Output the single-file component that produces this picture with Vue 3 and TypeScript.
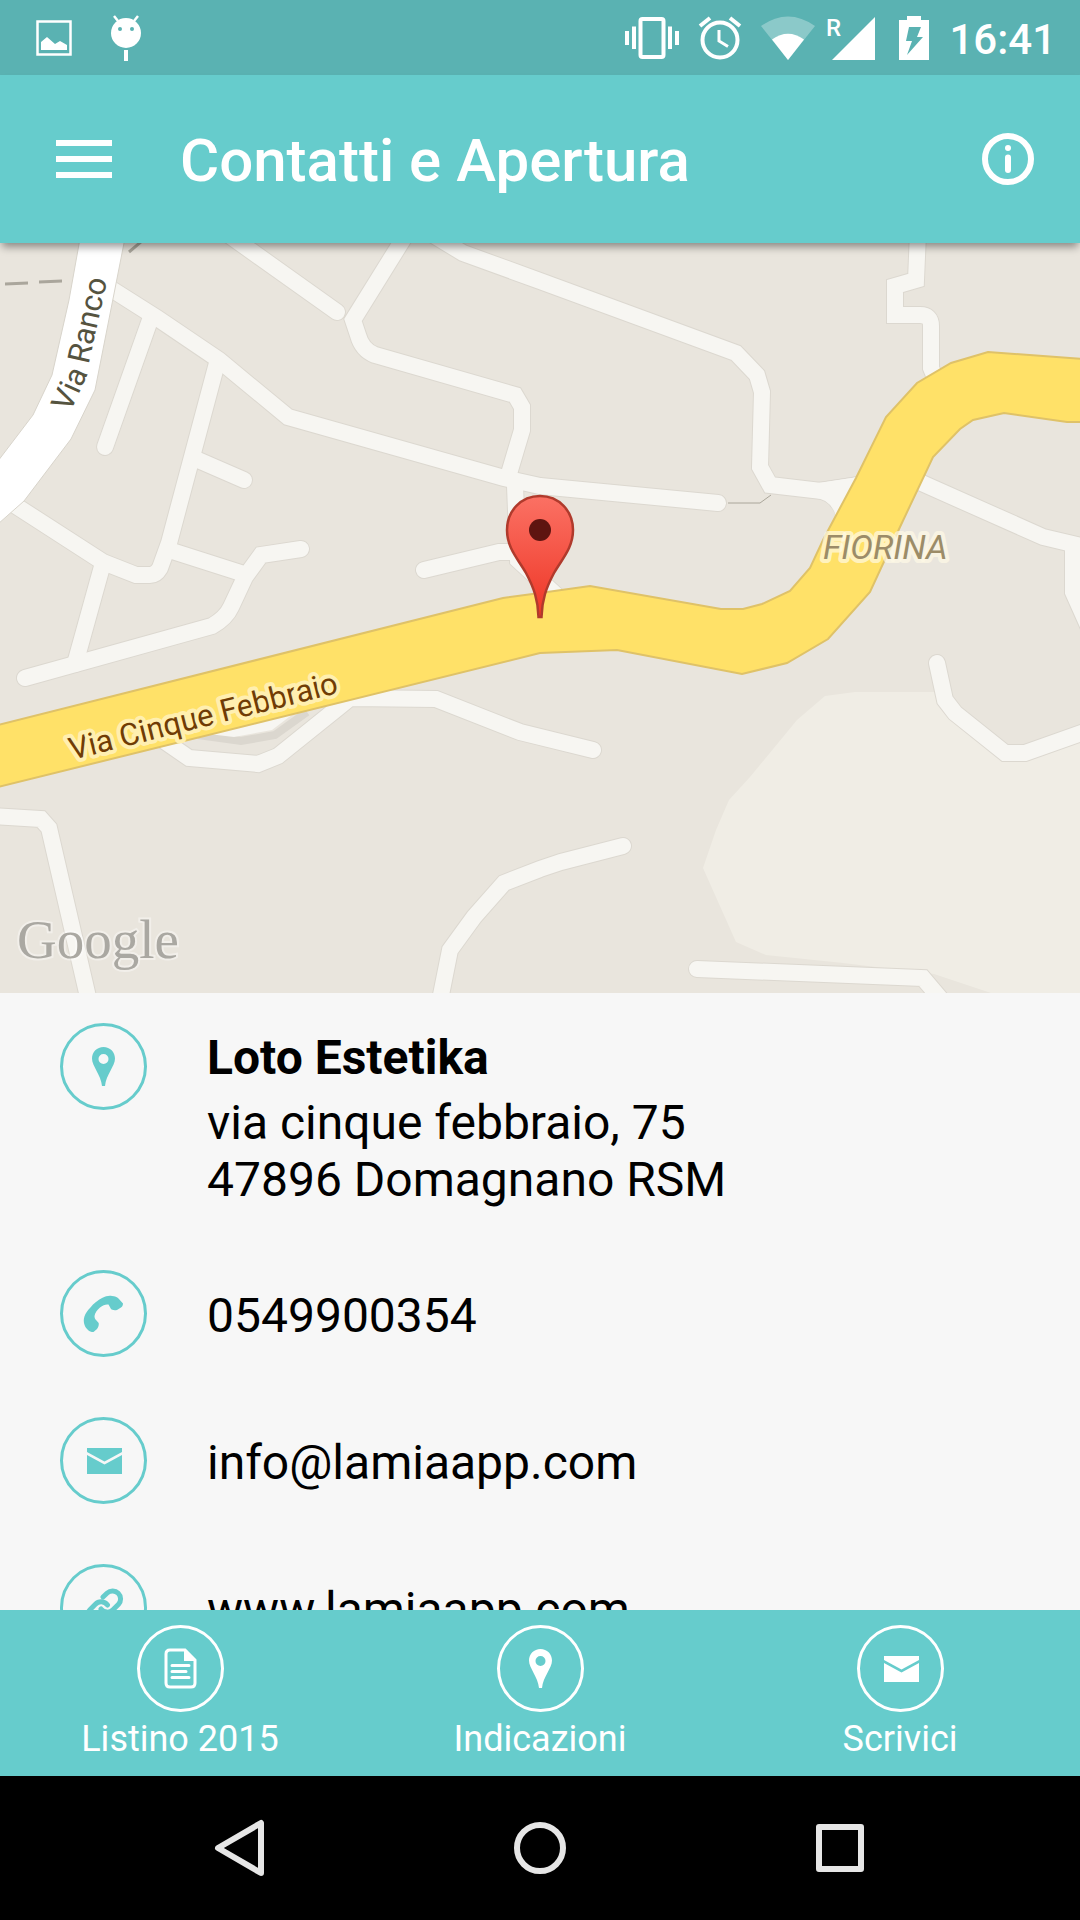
<script setup lang="ts">
type IconName = 'pin' | 'phone' | 'mail' | 'link' | 'doc'

interface Contact {
  icon: IconName
  text: string
  href: string
}

interface Action {
  icon: IconName
  label: string
}

interface IconShape {
  d: string
  stroke?: number
}

const icons: Record<IconName, IconShape[]> = {
  pin: [
    {
      d: 'M43.5 24C37 24 32 29 32 35.500C32 43 41 52 42 63H45C46 52 55 43 55 35.500C55 29 50 24 43.500 24ZM43.500 31A5 5 0 1 1 43.500 41A5 5 0 1 1 43.500 31Z',
    },
  ],
  phone: [
    {
      d: 'M24 53C23 47 26 42 30 38C34 33 38 30 42 28C46 26 49 25.500 52 26C55 26 57 27 58.500 28.500L63 33.500C63 35 62.500 36.500 61 37.500L57 40C54 40.500 52 40 51 39L48.500 34.500C46 34 43 35 40 37.500C37 40 35 43 34.500 46C34.500 48 35 49 36.500 50.500L38.700 53C39 55 38.500 57 37 59L33.500 62C31 62 29.500 61.500 28 60C26 58 24.500 56 24 53Z',
    },
  ],
  mail: [{ d: 'M27 31H62V35L44.500 44.500L27 35Z' }, { d: 'M27 38L44.500 47.500L62 38V57H27Z' }],
  link: [
    { d: 'M41 45A8 8 0 0 0 53 45.800L58.500 40.300A8 8 0 0 0 47.200 29L43 33', stroke: 5 },
    { d: 'M47.500 41A8 8 0 0 0 35.400 40.200L30 45.700A8 8 0 0 0 41.300 57L45 53', stroke: 5 },
  ],
  doc: [
    { d: 'M33 25H48L58 35V58Q58 62 54 62H33Q29 62 29 58V29Q29 25 33 25Z', stroke: 3 },
    { d: 'M47 24.500L58.500 36H47Z' },
    { d: 'M35 40.500H52M35 46.500H49M35 52.500H52', stroke: 3 },
  ],
}

const contacts: Contact[] = [
  { icon: 'phone', text: '0549900354', href: 'tel:0549900354' },
  { icon: 'mail', text: 'info@lamiaapp.com', href: 'mailto:info@lamiaapp.com' },
  { icon: 'link', text: 'www.lamiaapp.com', href: '#sito' },
]

const actions: Action[] = [
  { icon: 'doc', label: 'Listino 2015' },
  { icon: 'pin', label: 'Indicazioni' },
  { icon: 'mail', label: 'Scrivici' },
]

const minorRoads: string[] = [
  'M105 285L157 318L219 360L288 417L504 478L540 486L718 503',
  'M150 320L105 447',
  'M217 363L193 453L169 543L160 568Q156 575 150 575H136L103 562L10 502',
  'M198 460L244 480',
  'M169 550L241 573',
  'M301 549L261 555L245 577L231 607Q226 618 212 626L25 678',
  'M103 563L75 664',
  'M226 233L337 312',
  'M407 233L353 320L358 335Q362 350 375 355L515 395L522 407V430L508 477',
  'M425 230L463 253L540 281L736 353L757 375L762 392L760 467L770 485L821 491L860 485',
  'M515 486L518 560L556 595',
  'M424 570L499 552H516',
  'M918 233L916 280L895 286V315H920Q931 315 931 326V368L938 385',
  'M915 480L1043 537L1090 548',
  'M1073 545V592L1090 630',
  'M160 738L189 758L258 764L278 756L339 707L350 698L436 699L520 732L593 750',
  'M-10 816L41 819L49 828L91 1010',
  'M438 1010L450 950L474 917L504 883L540 869L561 862L623 846',
  'M937 663L945 700L955 713L1005 753H1025L1090 730',
  'M697 969L923 978L950 1010',
]
</script>

<template>
  <div class="screen">
    <div class="status">
      <svg width="36" height="36" viewBox="0 0 36 36" aria-hidden="true">
        <path d="M1.500 1.500H34.500V34.500H1.500Z" fill="none" stroke="#fff" stroke-width="2.500" />
        <path d="M5 22L11 17L19 24L24 21L31 25V30H5Z" fill="#fff" />
      </svg>
      <svg class="droid" width="32" height="46" viewBox="0 0 32 46" aria-hidden="true">
        <g fill="#fff">
          <circle cx="16" cy="18" r="15" />
          <path d="M14 35H18V46H14Z" />
        </g>
        <path d="M4 1L8 6M28 1L24 6" stroke="#fff" stroke-width="2.500" />
        <circle cx="10" cy="14" r="2" fill="#5ab2b2" />
        <circle cx="22" cy="14" r="2" fill="#5ab2b2" />
      </svg>
      <div class="status-right">
        <svg width="54" height="44" viewBox="0 0 54 44" aria-hidden="true">
          <rect x="15.500" y="3" width="23" height="38" rx="2" fill="none" stroke="#fff" stroke-width="4" />
          <path d="M0 15H4V29H0ZM7 10.500H11V33H7ZM43 10.500H47V33H43ZM50 15H54V29H50Z" fill="#fff" />
        </svg>
        <svg width="42" height="44" viewBox="0 0 42 44" aria-hidden="true">
          <circle cx="21" cy="24" r="17.500" fill="none" stroke="#fff" stroke-width="4" />
          <path d="M20 14V25L29 30.500" fill="none" stroke="#fff" stroke-width="3" />
          <path d="M1 10L11 2M41 10L31 2" stroke="#fff" stroke-width="4" />
        </svg>
        <svg width="54" height="44" viewBox="0 0 54 44" aria-hidden="true">
          <path d="M0 10Q27 -9 54 10L27 44Z" fill="#fff" opacity="0.3" />
          <path d="M11 23.500Q27 12 43 23.500L27 44Z" fill="#fff" />
        </svg>
        <svg class="signal" width="48" height="44" viewBox="0 0 48 44" aria-hidden="true">
          <path d="M48 1V44H5Z" fill="#fff" />
          <text x="-1" y="20" class="roaming">R</text>
        </svg>
        <svg class="battery" width="30" height="44" viewBox="0 0 30 44" aria-hidden="true">
          <path
            fill="#fff"
            fill-rule="evenodd"
            d="M8 0H22V4H30V44H0V4H8ZM10 11L7 25H13L8 39L24 21H18L22 11Z"
          />
        </svg>
        <span class="clock">16:41</span>
      </div>
    </div>

    <header class="appbar">
      <button type="button" class="icon-button" aria-label="Menu">
        <svg width="56" height="38" viewBox="0 0 56 38">
          <path d="M0 0H56V6H0ZM0 16H56V22H0ZM0 32H56V38H0Z" fill="#fff" />
        </svg>
      </button>
      <h1>Contatti e Apertura</h1>
      <button type="button" class="icon-button" aria-label="Informazioni">
        <svg width="52" height="52" viewBox="0 0 52 52">
          <circle cx="26" cy="26" r="23" fill="none" stroke="#fff" stroke-width="6" />
          <circle cx="26" cy="15" r="3" fill="#fff" />
          <path d="M26 24.500V37" stroke="#fff" stroke-width="6" stroke-linecap="round" />
        </svg>
      </button>
    </header>

    <svg
      class="map"
      viewBox="0 243 1080 750"
      preserveAspectRatio="xMidYMid slice"
      role="img"
      aria-label="Mappa di via Cinque Febbraio"
    >
      <defs>
        <linearGradient id="pin-fill" x1="0" y1="0" x2="0" y2="1">
          <stop offset="0" stop-color="#fb7164" />
          <stop offset="1" stop-color="#ee3626" />
        </linearGradient>
        <path id="ranco-line" d="M70 413L85 380L110 268" />
        <path id="febbraio-line" d="M72 760L362 687" />
      </defs>
      <rect y="243" width="1080" height="750" fill="#e9e5dd" />
      <path
        d="M855 692H936L1005 753H1025L1080 733V993H991L934 974L843 963L766 955L736 942L703 868L716 830L729 800L750 777L797 720L825 696Z"
        fill="#f0ede5"
      />
      <path d="M198 735L241 741L275 735L307 712" fill="none" stroke="#dbd7cf" stroke-width="8" />
      <path d="M200 733L234 737L272 730L293 714Z" fill="#f7f6f2" />
      <path
        d="M5 284L28 283M39 282L62 281M129 252L142 241"
        stroke="#aaa69c"
        stroke-width="3"
        fill="none"
      />
      <path d="M728 503H760L771 495" stroke="#aaa69a" fill="none" />
      <g fill="none" stroke-linecap="round">
        <path v-for="road in minorRoads" :key="road" :d="road" stroke="#dcd8d0" stroke-width="18" />
        <path d="M818 482L858 476L836 518Q832 500 812 498Z" fill="#dcd8d0" />
        <path v-for="road in minorRoads" :key="road" :d="road" stroke="#f7f6f2" stroke-width="16" />
        <path d="M818 483L858 477L836 517Q832 499 812 497Z" fill="#f7f6f2" />
      </g>
      <path
        d="M81 233L69 300L52 375L33 415L-2 461V524L24 501L71 439L95 390L126 233Z"
        fill="#fff"
        stroke="#d8d4cb"
      />
      <path
        d="M-2 725L503 598L540 593L590 586L721 609H743L762 604L790 591L810 568L824 538L856 478L886 417L917 383L951 363L988 352L1082 359V422H1067L1004 413L973 420L960 429L933 457L900 527L870 592L828 639L787 663L742 674L617 650L540 653L-2 787Z"
        fill="#ffe168"
        stroke="#dfc268"
        stroke-width="2"
      />
      <text class="label ranco"><textPath href="#ranco-line">Via Ranco</textPath></text>
      <text class="label febbraio"><textPath href="#febbraio-line">Via Cinque Febbraio</textPath></text>
      <text class="label fiorina" x="823" y="559">FIORINA</text>
      <text class="logo" x="17" y="958">Google</text>
      <path
        d="M540 496C521 496 507 511 507 530C507 548 518 559 526 573C534 588 538 600 538.500 617H541.500C542 600 546 588 554 573C562 559 573 548 573 530C573 511 559 496 540 496Z"
        fill="url(#pin-fill)"
        stroke="#b03a2c"
        stroke-width="2.500"
      />
      <circle cx="540" cy="530" r="11" fill="#5e1410" />
    </svg>

    <main class="contacts">
      <section class="row address-row">
        <svg class="badge" viewBox="0 0 87 87" aria-hidden="true">
          <circle cx="43.500" cy="43.500" r="42" />
          <path v-for="s in icons.pin" :key="s.d" :d="s.d" class="solid" fill-rule="evenodd" />
        </svg>
        <div>
          <h2>Loto Estetika</h2>
          <address>via cinque febbraio, 75<br />47896 Domagnano RSM</address>
        </div>
      </section>
      <a v-for="c in contacts" :key="c.text" class="row" :href="c.href">
        <svg class="badge" viewBox="0 0 87 87" aria-hidden="true">
          <circle cx="43.500" cy="43.500" r="42" />
          <path
            v-for="s in icons[c.icon]"
            :key="s.d"
            :d="s.d"
            :class="s.stroke ? 'line' : 'solid'"
            :stroke-width="s.stroke"
          />
        </svg>
        <span>{{ c.text }}</span>
      </a>
    </main>

    <nav class="actions" aria-label="Azioni">
      <button v-for="a in actions" :key="a.label" type="button">
        <svg class="badge" viewBox="0 0 87 87" aria-hidden="true">
          <circle cx="43.500" cy="43.500" r="42" />
          <path
            v-for="s in icons[a.icon]"
            :key="s.d"
            :d="s.d"
            :class="s.stroke ? 'line' : 'solid'"
            :stroke-width="s.stroke"
            fill-rule="evenodd"
          />
        </svg>
        <span>{{ a.label }}</span>
      </button>
    </nav>

    <div class="system">
      <button type="button" aria-label="Indietro">
        <svg width="60" height="60" viewBox="0 0 60 60">
          <path d="M51 5V55L8 30Z" />
        </svg>
      </button>
      <button type="button" aria-label="Home">
        <svg width="60" height="60" viewBox="0 0 60 60">
          <circle cx="30" cy="30" r="23" />
        </svg>
      </button>
      <button type="button" aria-label="Recenti">
        <svg width="60" height="60" viewBox="0 0 60 60">
          <path d="M9 9H51V51H9Z" />
        </svg>
      </button>
    </div>
  </div>
</template>

<style>
body {
  margin: 0;
}
</style>

<style scoped>
.screen {
  display: flex;
  flex-direction: column;
  height: 100vh;
  overflow: hidden;
  background: #f7f7f7;
  color: #000;
  font-family: Roboto, "Liberation Sans", sans-serif;
}

svg {
  display: block;
  flex: none;
}

button {
  margin: 0;
  padding: 0;
  border: 0;
  background: none;
  color: inherit;
  font: inherit;
  cursor: pointer;
}

.status {
  display: flex;
  flex: none;
  align-items: center;
  box-sizing: border-box;
  height: 75px;
  padding: 0 24px 0 36px;
  background: #5ab2b2;
  color: #fff;
}

.droid {
  margin-left: 38px;
}

.status-right {
  display: flex;
  align-items: center;
  gap: 20px;
  margin-left: auto;
}

.status-right svg {
  overflow: visible;
}

.status-right .signal {
  margin-left: -8px;
}

.status-right .battery {
  margin-left: 4px;
}

.roaming {
  fill: #fff;
  font-size: 24px;
  font-weight: 500;
}

.clock {
  padding-top: 4px;
  font-size: 42px;
  font-weight: 500;
  line-height: 48px;
}

.appbar {
  position: relative;
  z-index: 1;
  display: flex;
  flex: none;
  align-items: center;
  box-sizing: border-box;
  height: 168px;
  padding: 0 46px 0 56px;
  background: #66cccc;
  box-shadow: 0 6px 8px -2px rgba(0, 0, 0, 0.4);
  color: #fff;
}

.appbar h1 {
  flex: 1;
  margin: 0;
  padding: 4px 0 0 68px;
  font-size: 60px;
  font-weight: 500;
  line-height: 72px;
}

.map {
  width: 100%;
  aspect-ratio: 36 / 25;
}

.label {
  font-size: 31px;
  stroke-width: 8px;
  stroke-linejoin: round;
  paint-order: stroke;
}

.ranco {
  fill: #55533f;
}

.febbraio {
  fill: #703c05;
  stroke: #ffefb0;
}

.fiorina {
  fill: #9c8c68;
  stroke: rgba(255, 250, 230, 0.7);
  font-size: 34px;
  font-style: italic;
}

.logo {
  fill: #aaa8a2;
  stroke: rgba(255, 255, 255, 0.4);
  stroke-width: 4px;
  paint-order: stroke;
  font-family: "Liberation Serif", serif;
  font-size: 55px;
}

.contacts {
  flex: 1;
  min-height: 0;
  overflow: hidden;
}

.row {
  display: flex;
  align-items: center;
  gap: 60px;
  padding: 30px 60px;
  color: #000;
  font-size: 48px;
  line-height: 57px;
  text-decoration: none;
}

.row span {
  padding-top: 4px;
}

.address-row {
  align-items: flex-start;
}

.address-row > div {
  padding: 6px 0 2px;
}

.address-row h2 {
  margin: 0 0 8px;
  font-size: 48px;
  font-weight: 700;
  line-height: 57px;
}

.address-row address {
  font-style: normal;
}

.badge {
  width: 87px;
  height: 87px;
  color: #66cccc;
}

.badge circle {
  fill: none;
  stroke: currentColor;
  stroke-width: 3px;
}

.badge .solid {
  fill: currentColor;
}

.badge .line {
  fill: none;
  stroke: currentColor;
  stroke-linecap: round;
}

.actions {
  display: grid;
  flex: none;
  grid-template-columns: repeat(3, 1fr);
  padding: 15px 0 16px;
  background: #66cccc;
  color: #fff;
}

.actions button {
  display: flex;
  flex-direction: column;
  align-items: center;
  gap: 6px;
  font-size: 36px;
  line-height: 42px;
}

.actions .badge {
  color: #fff;
}

.system {
  display: flex;
  flex: none;
  justify-content: center;
  gap: 240px;
  height: 144px;
  background: #000;
}

.system svg {
  fill: none;
  stroke: #e6e6e6;
  stroke-width: 6px;
  stroke-linejoin: round;
}
</style>
